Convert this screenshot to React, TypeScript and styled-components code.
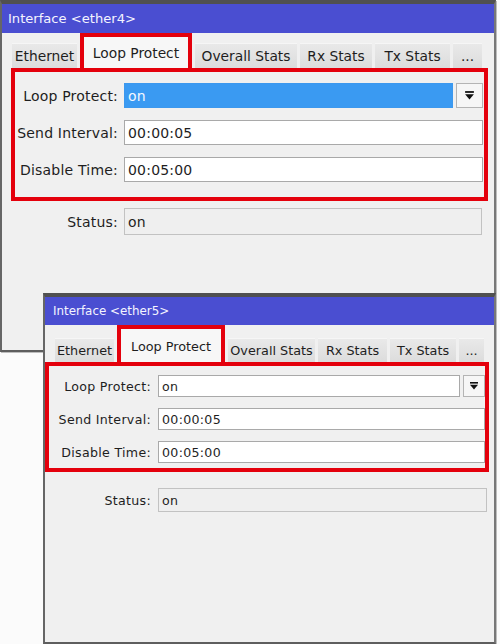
import React from "react";
import styled, { createGlobalStyle } from "styled-components";

type Metrics = {
  left: number;
  top: number;
  width: number;
  height: number;
  titleH: number;
  titleFont: number;
  titlePad: number;
  title: string;
  tabRowH: number;
  tabPadL: number;
  tabH: number;
  tabFont: number;
  tabWidths: number[];
  formML: number;
  formMR: number;
  formPT: number;
  formPB: number;
  rowH: number;
  rowGap: number;
  labelW: number;
  labelGap: number;
  fieldPR: number;
  font: number;
  spacing: number;
  btnW: number;
  statusMT: number;
  statusH: number;
  statusPR: number;
  highlight: boolean;
};

const W1: Metrics = {
  left: 0,
  top: 0,
  width: 496,
  height: 352,
  titleH: 29,
  titleFont: 13.1,
  titlePad: 6,
  title: "Interface <ether4>",
  tabRowH: 35,
  tabPadL: 10,
  tabH: 25,
  tabFont: 13.8,
  tabWidths: [65, 112, 102, 72, 75, 29],
  formML: 9,
  formMR: 6,
  formPT: 11,
  formPB: 15,
  rowH: 25,
  rowGap: 12,
  labelW: 103,
  labelGap: 6,
  fieldPR: 1,
  font: 14,
  spacing: 0.2,
  btnW: 27,
  statusMT: 7,
  statusH: 27,
  statusPR: 12,
  highlight: true,
};

const W2: Metrics = {
  left: 43,
  top: 293,
  width: 453,
  height: 351,
  titleH: 28,
  titleFont: 11.9,
  titlePad: 8,
  title: "Interface <ether5>",
  tabRowH: 37,
  tabPadL: 10,
  tabH: 24,
  tabFont: 12.8,
  tabWidths: [59, 108, 87, 69, 66, 25],
  formML: 0,
  formMR: 5,
  formPT: 9,
  formPB: 5,
  rowH: 22,
  rowGap: 11,
  labelW: 102,
  labelGap: 7,
  fieldPR: 0,
  font: 12.6,
  spacing: 0.3,
  btnW: 22,
  statusMT: 16,
  statusH: 24,
  statusPR: 7,
  highlight: false,
};

const TABS = ["Ethernet", "Loop Protect", "Overall Stats", "Rx Stats", "Tx Stats", "..."];

const Global = createGlobalStyle`
  *, *::before, *::after { box-sizing: border-box; }
  html, body { margin: 0; padding: 0; background: #fbfbfb; }
  body { font-family: "DejaVu Sans", "Liberation Sans", sans-serif; }
`;

const Desktop = styled.div`
  position: relative;
  width: 500px;
  height: 644px;
  overflow: hidden;
  background: #fbfbfb;
`;

const Win = styled.div<{ $m: Metrics }>`
  position: absolute;
  left: ${(p) => p.$m.left}px;
  top: ${(p) => p.$m.top}px;
  width: ${(p) => p.$m.width}px;
  height: ${(p) => p.$m.height}px;
  display: flex;
  flex-direction: column;
  background: #f0f0f0;
  border-style: solid;
  border-width: 4px 2px 2px 2px;
  border-color: #505050 #777 #5e5e5e #666;
  box-shadow: 1px 1px 0 #bdbdbd;
`;

const TitleBar = styled.div<{ $m: Metrics }>`
  height: ${(p) => p.$m.titleH}px;
  flex: none;
  display: flex;
  align-items: center;
  padding-left: ${(p) => p.$m.titlePad}px;
  background: #4a4ed1;
  color: #f4f4ff;
  font-size: ${(p) => p.$m.titleFont}px;
  white-space: nowrap;
`;

const TabRow = styled.div<{ $m: Metrics }>`
  height: ${(p) => p.$m.tabRowH}px;
  flex: none;
  display: flex;
  align-items: flex-end;
  gap: 3px;
  padding-left: ${(p) => p.$m.tabPadL}px;
`;

const Tab = styled.div<{ $w: number; $m: Metrics }>`
  width: ${(p) => p.$w}px;
  height: ${(p) => p.$m.tabH}px;
  flex: none;
  display: flex;
  align-items: center;
  justify-content: center;
  background: linear-gradient(#e9e9e9, #dcdcdc);
  border-top: 1px solid #f6f6f6;
  color: #1e1e1e;
  font-size: ${(p) => p.$m.tabFont}px;
  white-space: nowrap;
  overflow: hidden;
`;

const ActiveTab = styled.div<{ $w: number; $m: Metrics }>`
  width: ${(p) => p.$w}px;
  height: 100%;
  flex: none;
  display: flex;
  align-items: center;
  justify-content: center;
  padding-top: 1px;
  background: #f7f7f7;
  border: 4px solid #e4000c;
  border-bottom: none;
  color: #1e1e1e;
  font-size: ${(p) => p.$m.tabFont}px;
  white-space: nowrap;
`;

const FormBox = styled.div<{ $m: Metrics }>`
  flex: none;
  margin: 0 ${(p) => p.$m.formMR}px 0 ${(p) => p.$m.formML}px;
  border: 4px solid #e4000c;
  padding: ${(p) => p.$m.formPT}px ${(p) => p.$m.fieldPR}px ${(p) => p.$m.formPB}px 0;
  display: flex;
  flex-direction: column;
  gap: ${(p) => p.$m.rowGap}px;
`;

const Row = styled.div<{ $m: Metrics }>`
  height: ${(p) => p.$m.rowH}px;
  display: grid;
  grid-template-columns: ${(p) => p.$m.labelW}px 1fr;
  column-gap: ${(p) => p.$m.labelGap}px;
  font-size: ${(p) => p.$m.font}px;
  letter-spacing: ${(p) => p.$m.spacing}px;
  color: #1e1e1e;
`;

const StatusRow = styled(Row)<{ $m: Metrics }>`
  height: ${(p) => p.$m.statusH}px;
  flex: none;
  margin: ${(p) => p.$m.statusMT}px ${(p) => p.$m.statusPR}px 0
    ${(p) => p.$m.formML + 4}px;
`;

const Label = styled.div`
  align-self: center;
  text-align: right;
  white-space: nowrap;
`;

const Field = styled.div<{ $kind?: "edit" | "sel" | "ro" }>`
  flex: 1;
  min-width: 0;
  display: flex;
  align-items: center;
  padding-left: 3px;
  border: 1px solid
    ${(p) => (p.$kind === "ro" ? "#c2c2c2" : p.$kind === "sel" ? "#3c98ee" : "#a9a9a9")};
  background: ${(p) =>
    p.$kind === "ro" ? "#efefef" : p.$kind === "sel" ? "#3a9af2" : "#ffffff"};
  color: ${(p) => (p.$kind === "sel" ? "#f4f8ff" : "#1e1e1e")};
`;

const Combo = styled.div`
  display: flex;
  gap: 3px;
`;

const DropBtn = styled.div<{ $w: number }>`
  width: ${(p) => p.$w}px;
  flex: none;
  display: flex;
  align-items: center;
  justify-content: center;
  background: #f6f6f6;
  border: 1px solid #b4b4b4;
`;

const DropIcon = ({ size }: { size: number }) => (
  <svg width={size} height={size} viewBox="0 0 10 10">
    <rect x="1" y="1" width="8" height="1.6" fill="#111" />
    <polygon points="1,3.8 9,3.8 5,8.6" fill="#111" />
  </svg>
);

const InterfaceWindow = ({ m }: { m: Metrics }) => (
  <Win $m={m}>
    <TitleBar $m={m}>{m.title}</TitleBar>
    <TabRow $m={m}>
      {TABS.map((t, i) =>
        i === 1 ? (
          <ActiveTab key={t} $w={m.tabWidths[i]} $m={m}>
            {t}
          </ActiveTab>
        ) : (
          <Tab key={t} $w={m.tabWidths[i]} $m={m}>
            {t}
          </Tab>
        )
      )}
    </TabRow>
    <FormBox $m={m}>
      <Row $m={m}>
        <Label>Loop Protect:</Label>
        <Combo>
          <Field $kind={m.highlight ? "sel" : "edit"}>on</Field>
          <DropBtn $w={m.btnW}>
            <DropIcon size={m.btnW > 24 ? 11 : 10} />
          </DropBtn>
        </Combo>
      </Row>
      <Row $m={m}>
        <Label>Send Interval:</Label>
        <Field>00:00:05</Field>
      </Row>
      <Row $m={m}>
        <Label>Disable Time:</Label>
        <Field>00:05:00</Field>
      </Row>
    </FormBox>
    <StatusRow $m={m}>
      <Label>Status:</Label>
      <Field $kind="ro">on</Field>
    </StatusRow>
  </Win>
);

export default function App() {
  return (
    <>
      <Global />
      <Desktop>
        <InterfaceWindow m={W1} />
        <InterfaceWindow m={W2} />
      </Desktop>
    </>
  );
}
